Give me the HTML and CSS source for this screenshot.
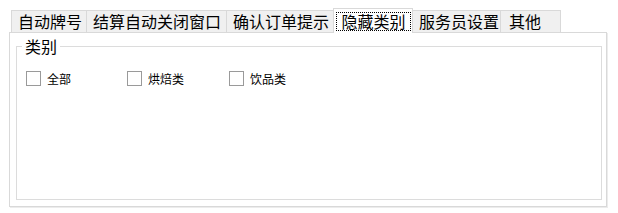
FILE: index.html
```html
<!DOCTYPE html>
<html lang="zh-CN">
<head>
<meta charset="utf-8">
<title>隐藏类别</title>
<link rel="stylesheet" href="styles.css">
</head>
<body>
<div class="window">
  <div class="tabs">
    <div class="tab tab-1">自动牌号</div>
    <div class="tab tab-2">结算自动关闭窗口</div>
    <div class="tab tab-3">确认订单提示</div>
    <div class="tab tab-active"><span class="focus">隐藏类别</span></div>
    <div class="tab tab-5">服务员设置</div>
    <div class="tab tab-6">其他</div>
  </div>
  <div class="panel">
    <fieldset class="group">
      <legend class="group-title">类别</legend>
      <div class="checks">
        <label class="check"><span class="box"></span><span class="check-text">全部</span></label>
        <label class="check"><span class="box"></span><span class="check-text">烘焙类</span></label>
        <label class="check"><span class="box"></span><span class="check-text">饮品类</span></label>
      </div>
    </fieldset>
  </div>
</div>
</body>
</html>
```
FILE: styles.css
```css
html, body {
  margin: 0;
  padding: 0;
  background: #ffffff;
}

body {
  font-family: "Noto Sans CJK SC", "Noto Sans", sans-serif;
  color: #000000;
}

.window {
  width: 618px;
  height: 213px;
  padding: 8px 0 0 9px;
  box-sizing: border-box;
}

.tabs {
  display: flex;
  align-items: flex-end;
  height: 24px;
  padding-left: 2px;
  position: relative;
  z-index: 1;
}

.tab {
  box-sizing: border-box;
  height: 22px;
  border: 1px solid #d9d9d9;
  border-bottom: none;
  background: #f0f0f0;
  font-size: 16px;
  line-height: 20px;
  text-align: left;
  padding-left: 6px;
  white-space: nowrap;
  margin-right: -1px;
}

.tab-1 { width: 76px; }
.tab-2 { width: 141px; }
.tab-3 { width: 110px; }
.tab-5 { width: 91px; padding-left: 8px; }
.tab-6 { width: 61px; padding-left: 8px; }

.tab-active {
  width: 80px;
  height: 25px;
  margin-left: -2px;
  margin-right: -3px;
  margin-bottom: -1px;
  background: #ffffff;
  position: relative;
  z-index: 2;
  display: flex;
  padding: 3px 1px 2px 2px;
}

.focus {
  flex: 1;
  box-sizing: border-box;
  border: 1px dotted #000000;
  line-height: 16px;
  text-align: center;
}

.panel {
  box-sizing: border-box;
  width: 598px;
  height: 175px;
  border: 1px solid #d9d9d9;
  box-shadow: 1px 1px 0 #ececec;
  background: #ffffff;
  padding: 4px 4px 6px 6px;
}

.group {
  box-sizing: border-box;
  height: 100%;
  margin: 0;
  padding: 16px 0 0 0;
  border: 1px solid #dcdcdc;
  min-width: 0;
}

.group-title {
  margin-left: 5px;
  padding: 0 3px;
  font-size: 16px;
  line-height: 18px;
}

.checks {
  display: grid;
  grid-template-columns: 101px 102px auto;
  padding-left: 9px;
}

.check {
  display: flex;
  align-items: center;
  gap: 6px;
  font-size: 12px;
  line-height: 15px;
}

.box {
  box-sizing: border-box;
  width: 15px;
  height: 15px;
  border: 1px solid #9a9a9a;
  background: #ffffff;
}
```
